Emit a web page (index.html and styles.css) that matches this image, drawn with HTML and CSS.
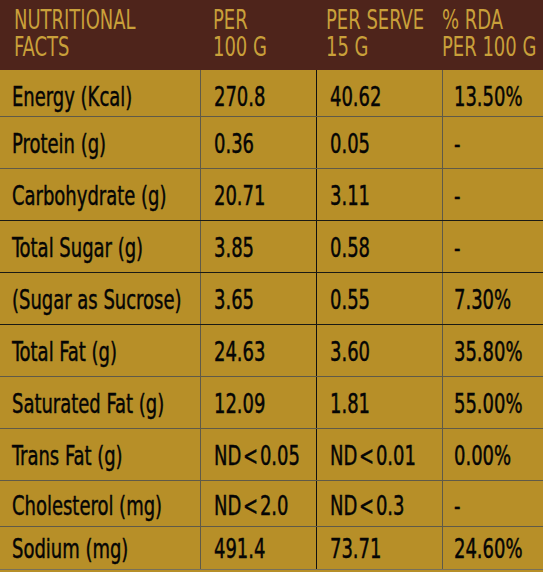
FILE: index.html
```html
<!DOCTYPE html>
<html lang="en">
<head>
    <meta charset="UTF-8">
    <meta name="viewport" content="width=device-width, initial-scale=1.0">
    <title>Nutritional Facts</title>
    <link rel="stylesheet" href="styles.css">
</head>
<body>
    <table class="facts">
        <thead>
            <tr>
                <th class="col-name"><span class="t">NUTRITIONAL<br>FACTS</span></th>
                <th class="col-100"><span class="t">PER<br>100 G</span></th>
                <th class="col-serve"><span class="t">PER SERVE<br>15 G</span></th>
                <th class="col-rda"><span class="t">% RDA<br>PER 100 G</span></th>
            </tr>
        </thead>
        <tbody>
            <tr class="short">
                <td><span class="t">Energy (Kcal)</span></td><td><span class="t">270.8</span></td><td><span class="t">40.62</span></td><td><span class="t">13.50%</span></td>
            </tr>
            <tr>
                <td><span class="t">Protein (g)</span></td><td><span class="t">0.36</span></td><td><span class="t">0.05</span></td><td><span class="t">-</span></td>
            </tr>
            <tr class="dark">
                <td><span class="t">Carbohydrate (g)</span></td><td><span class="t">20.71</span></td><td><span class="t">3.11</span></td><td><span class="t">-</span></td>
            </tr>
            <tr class="dark">
                <td><span class="t">Total Sugar (g)</span></td><td><span class="t">3.85</span></td><td><span class="t">0.58</span></td><td><span class="t">-</span></td>
            </tr>
            <tr class="dark">
                <td><span class="t">(Sugar as Sucrose)</span></td><td><span class="t">3.65</span></td><td><span class="t">0.55</span></td><td><span class="t">7.30%</span></td>
            </tr>
            <tr>
                <td><span class="t">Total Fat (g)</span></td><td><span class="t">24.63</span></td><td><span class="t">3.60</span></td><td><span class="t">35.80%</span></td>
            </tr>
            <tr>
                <td><span class="t">Saturated Fat (g)</span></td><td><span class="t">12.09</span></td><td><span class="t">1.81</span></td><td><span class="t">55.00%</span></td>
            </tr>
            <tr>
                <td><span class="t">Trans Fat (g)</span></td><td><span class="t">ND&hairsp;&lt;&hairsp;0.05</span></td><td><span class="t">ND&hairsp;&lt;&hairsp;0.01</span></td><td><span class="t">0.00%</span></td>
            </tr>
            <tr class="short chol">
                <td><span class="t">Cholesterol (mg)</span></td><td><span class="t">ND&hairsp;&lt;&hairsp;2.0</span></td><td><span class="t">ND&hairsp;&lt;&hairsp;0.3</span></td><td><span class="t">-</span></td>
            </tr>
            <tr class="last">
                <td><span class="t">Sodium (mg)</span></td><td><span class="t">491.4</span></td><td><span class="t">73.71</span></td><td><span class="t">24.60%</span></td>
            </tr>
        </tbody>
    </table>
</body>
</html>
```

FILE: styles.css
```css
body {
    margin: 0;
    background-color: #b78f28;
    font-family: "DejaVu Sans Condensed", "DejaVu Sans", sans-serif;
    font-stretch: condensed;
}

/* the print face is narrower than anything installed, squeeze it */
.t {
    display: inline-block;
    white-space: nowrap;
    transform: scaleX(0.74);
    transform-origin: left top;
}

.facts {
    width: 543px;
    border-collapse: collapse;
    table-layout: fixed;
}

.facts th {
    background-color: #4e241b;
    color: #c9a03a;
    font-weight: normal;
    font-size: 27px;
    line-height: 27px;
    text-align: left;
    vertical-align: top;
    height: 70px;
    padding: 6px 0 0 0;
    box-sizing: border-box;
}

.col-name { width: 200px; padding-left: 14px !important; }
.col-100 { width: 116px; padding-left: 13px !important; }
.col-serve { width: 126px; padding-left: 10px !important; }
.col-rda { padding-left: 0 !important; }

.facts td {
    color: #050505;
    -webkit-text-stroke: 0.45px #050505;
    font-size: 27px;
    line-height: 30px;
    vertical-align: top;
    height: 52px;
    padding: 12px 0 0 13px;
    box-sizing: border-box;
    border-bottom: 1px solid #5f5a48;
    border-left: 1px solid #5f5a48;
}

.facts td:first-child {
    border-left: none;
    padding-left: 12px;
}

.facts td:nth-child(3) {
    border-left-color: #111;
}

.facts td:nth-child(4) {
    padding-left: 11px;
}

.facts tr.dark td {
    border-bottom-color: #1a1a14;
}

.facts tr.short td {
    height: 46px;
}

.facts tr.chol td {
    padding-top: 10px;
}

.facts tr.last td {
    height: 43px;
    padding-top: 7px;
    border-bottom-color: #77705a;
}
```
